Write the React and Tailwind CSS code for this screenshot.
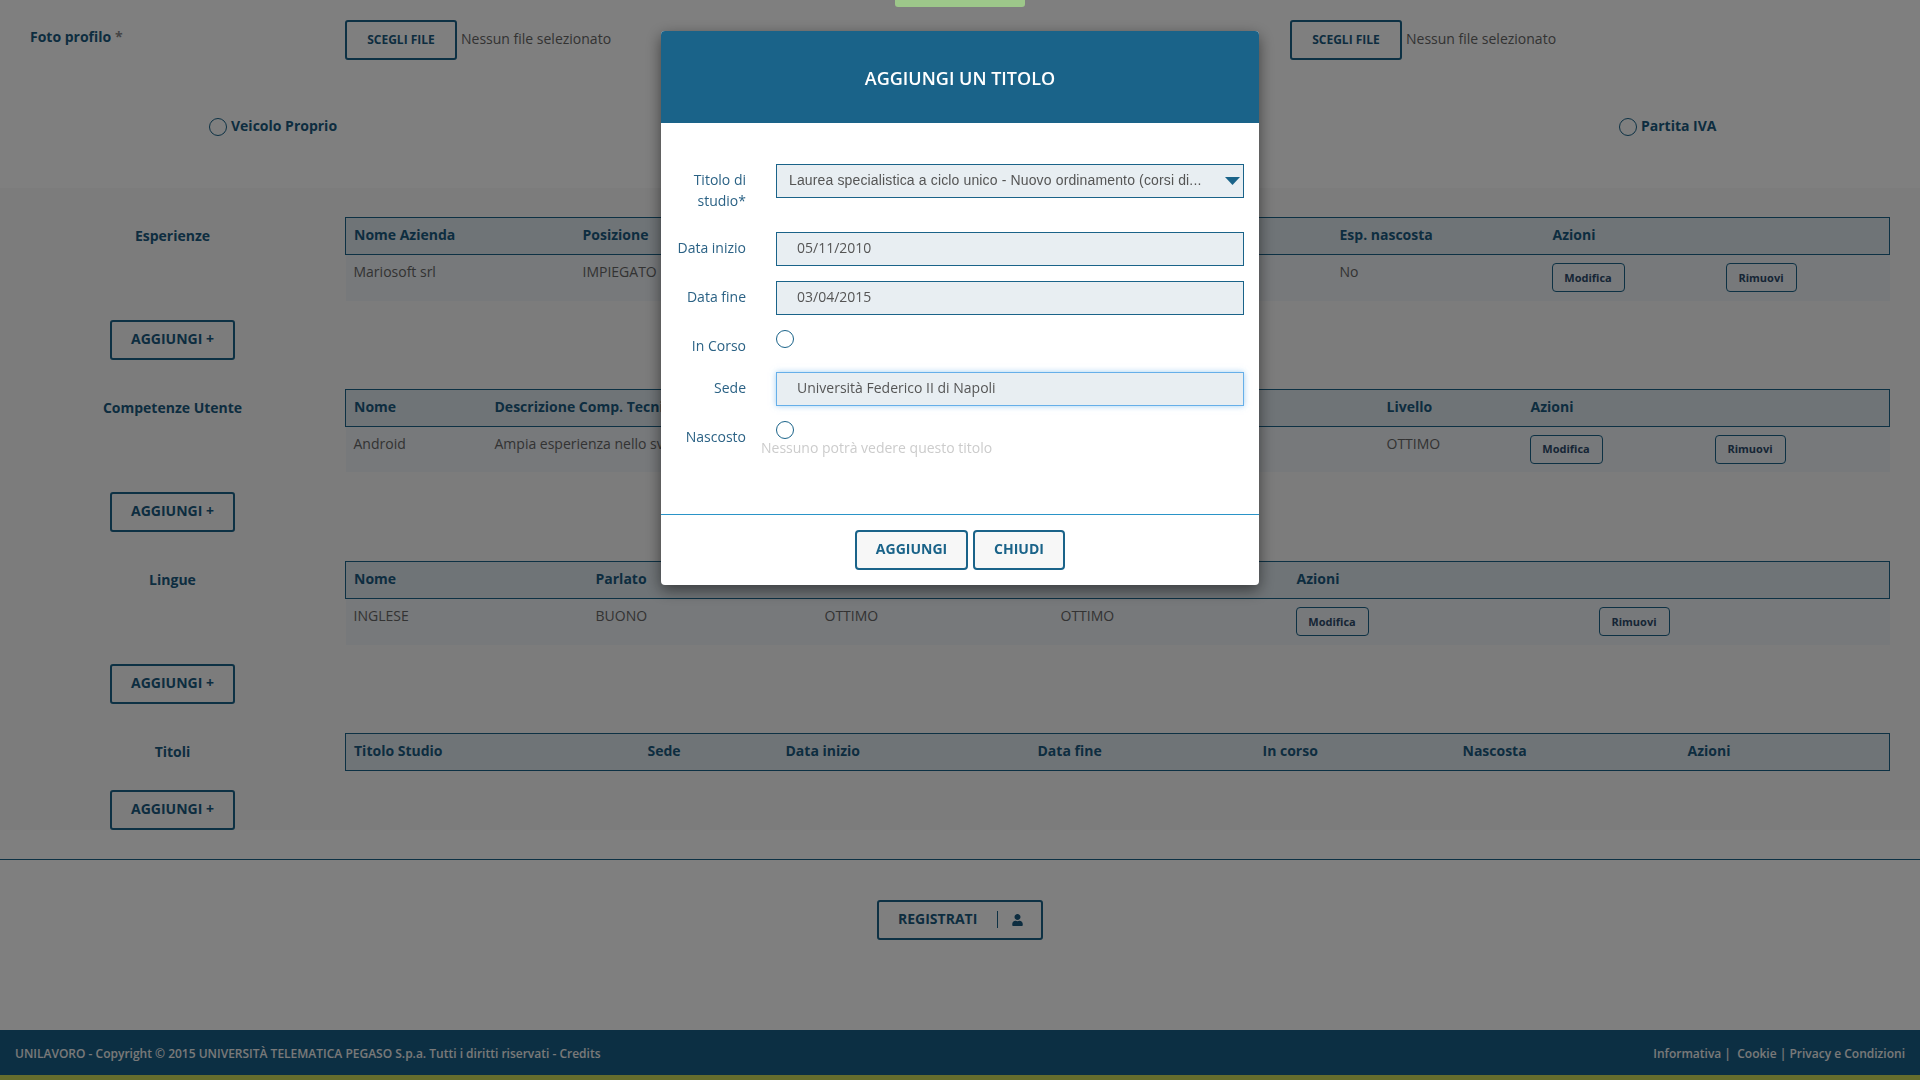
import { FaUser } from "react-icons/fa";

const rowBtn =
  "h-[29px] rounded-[4px] border border-[#1a6389] bg-transparent pb-[1px] text-[11px] font-bold text-[#2c4a6b]";

function Modifica() {
  return <button className={`${rowBtn} w-[73px]`}>Modifica</button>;
}

function Rimuovi() {
  return <button className={`${rowBtn} w-[71px]`}>Rimuovi</button>;
}

function DataTable({ cols, head, cells }) {
  return (
    <table className="w-[1544px] table-fixed border-collapse text-[14px]">
      <colgroup>
        {cols.map((c, i) => (
          <col key={i} className={c} />
        ))}
      </colgroup>
      <thead>
        <tr className="h-[37px] border border-[#1a6389] bg-[#dfe8ee]">
          {head.map((h, i) => (
            <th key={i} className="pb-[3px] pl-[8px] text-left align-middle font-bold text-[#1a5a80]">
              {h}
            </th>
          ))}
        </tr>
      </thead>
      {cells && (
        <tbody>
          <tr className="h-[46px] bg-[#eef2f6]">
            {cells.map((c, i) =>
              typeof c === "string" ? (
                <td key={i} className="pl-[8px] pt-[6px] align-top leading-[21px] text-[#666666]">
                  {c}
                </td>
              ) : (
                <td key={i} className="pl-[7px] pt-[8px] align-top leading-[21px]">
                  {c}
                </td>
              )
            )}
          </tr>
        </tbody>
      )}
    </table>
  );
}

function AddButton() {
  return (
    <button className="ml-[110px] block h-[40px] w-[125px] rounded-[3px] border-2 border-[#1a6389] pb-[3px] text-[14px] font-bold text-[#1a5a80]">
      AGGIUNGI +
    </button>
  );
}

function Block({ title, addGap, children }) {
  return (
    <div>
      <div className="flex">
        <div className="w-[345px] pt-[8px] text-center text-[14px] font-bold leading-[21px] text-[#1a5a80]">
          {title}
        </div>
        {children}
      </div>
      <div className={addGap}>
        <AddButton />
      </div>
    </div>
  );
}

function FilePick() {
  return (
    <div className="flex items-center">
      <button className="h-[40px] w-[112px] rounded-[3px] border-2 border-[#1a6389] text-[12px] font-bold text-[#1a5a80]">
        SCEGLI FILE
      </button>
      <span className="mb-[4px] ml-[4px] text-[14px] text-[#666666]">Nessun file selezionato</span>
    </div>
  );
}

function Radio({ className = "" }) {
  return (
    <input
      type="radio"
      className={`block h-[18px] w-[18px] appearance-none rounded-full border border-[#1a6389] bg-transparent ${className}`}
    />
  );
}

function FieldRow({ label, rowClass, children }) {
  return (
    <div className={`flex ${rowClass}`}>
      <div className="w-[85px] pt-[5px] text-right text-[14px] leading-[21px] text-[#2b6285]">{label}</div>
      <div className="ml-[30px] w-[468px]">{children}</div>
    </div>
  );
}

function TextField({ value, focused }) {
  return (
    <div
      className={
        focused
          ? "flex h-[34px] items-center border border-[#66afe9] bg-[#e8eef2] pb-[3px] pl-[20px] text-[14px] text-[#555555] shadow-[0_0_6px_rgba(102,175,233,0.6)]"
          : "flex h-[34px] items-center border border-[#1a6389] bg-[#e8eef2] pb-[3px] pl-[20px] text-[14px] text-[#555555]"
      }
    >
      {value}
    </div>
  );
}

export default function App() {
  return (
    <div className="relative flex h-screen flex-col overflow-hidden bg-white font-['Open_Sans',sans-serif]">
      {/* Profile pictures and yes/no flags */}
      <section className="h-[188px] shrink-0">
        <div className="flex pt-[20px]">
          <div className="w-[345px] pl-[30px] pt-[6px] text-[14px] font-bold leading-[21px] text-[#1a5a80]">
            Foto profilo <span className="text-[#888888]">*</span>
          </div>
          <div className="w-[945px]">
            <FilePick />
          </div>
          <FilePick />
        </div>
        <div className="mt-[55px] flex items-start">
          <div className="flex w-[1619px] items-start pl-[209px]">
            <Radio className="mt-[3px]" />
            <span className="ml-[4px] text-[14px] font-bold text-[#1a5a80]">Veicolo Proprio</span>
          </div>
          <div className="flex items-start">
            <Radio className="mt-[3px]" />
            <span className="ml-[4px] text-[14px] font-bold text-[#1a5a80]">Partita IVA</span>
          </div>
        </div>
      </section>

      {/* Experience, skills, languages and degrees */}
      <section className="flex h-[642px] shrink-0 flex-col gap-[29px] bg-[#f8f8f8] pt-[29px]">
        <Block title="Esperienze" addGap="mt-[19px]">
          <DataTable
            cols={["w-[229px]", "w-[757px]", "w-[213px]", "w-[174px]", "w-[171px]"]}
            head={["Nome Azienda", "Posizione", "Esp. nascosta", "Azioni", ""]}
            cells={["Mariosoft srl", "IMPIEGATO", "No", <Modifica />, <Rimuovi />]}
          />
        </Block>
        <Block title="Competenze Utente" addGap="mt-[20px]">
          <DataTable
            cols={["w-[141px]", "w-[892px]", "w-[144px]", "w-[185px]", "w-[182px]"]}
            head={["Nome", "Descrizione Comp. Tecnica", "Livello", "Azioni", ""]}
            cells={["Android", "Ampia esperienza nello sviluppo", "OTTIMO", <Modifica />, <Rimuovi />]}
          />
        </Block>
        <Block title="Lingue" addGap="mt-[19px]">
          <DataTable
            cols={["w-[242px]", "w-[229px]", "w-[236px]", "w-[236px]", "w-[303px]", "w-[298px]"]}
            head={["Nome", "Parlato", "", "", "Azioni", ""]}
            cells={["INGLESE", "BUONO", "OTTIMO", "OTTIMO", <Modifica />, <Rimuovi />]}
          />
        </Block>
        <Block title="Titoli" addGap="mt-[19px]">
          <DataTable
            cols={["w-[294px]", "w-[138px]", "w-[252px]", "w-[225px]", "w-[200px]", "w-[225px]", "w-[210px]"]}
            head={["Titolo Studio", "Sede", "Data inizio", "Data fine", "In corso", "Nascosta", "Azioni"]}
          />
        </Block>
      </section>

      {/* Submit */}
      <section className="mt-[29px] flex h-[171px] shrink-0 justify-center border-t border-[#1a6389] pt-[40px]">
        <button className="flex h-[40px] w-[166px] items-center rounded-[3px] border-2 border-[#1a6389] pl-[19px] text-[14px] font-bold text-[#1a5a80]">
          <span className="mb-[3px] w-[99px] text-left">REGISTRATI</span>
          <span className="mb-[1px] mr-[14px] h-[17px] border-l border-[#1a6389]" />
          <FaUser className="mb-[1px] h-[12px] w-[11px]" />
        </button>
      </section>

      <footer className="flex h-[45px] shrink-0 items-center justify-between bg-[#185e86] px-[15px] pt-[2px] text-[12px] font-semibold text-[#f2f2f2]">
        <span>UNILAVORO - Copyright © 2015 UNIVERSITÀ TELEMATICA PEGASO S.p.a. Tutti i diritti riservati - Credits</span>
        <span className="whitespace-pre">Informativa |  Cookie | Privacy e Condizioni</span>
      </footer>
      <div className="h-[5px] shrink-0 bg-[#ccda5a]" />

      {/* Dimmed backdrop behind the dialog */}
      <div className="fixed inset-0 z-40 bg-black/50" />
      <div className="absolute left-[895px] top-0 z-50 h-[7px] w-[130px] rounded-b-[3px] bg-[#9dc78a]" />

      {/* Add-a-degree dialog */}
      <div className="fixed inset-x-0 top-[31px] z-50 mx-auto w-[598px] overflow-hidden rounded-[4px] bg-white shadow-[0_5px_15px_rgba(0,0,0,0.5)]">
        <div className="flex h-[92px] items-center justify-center bg-[#1a6389] pt-[2px] text-[18px] font-semibold text-white">
          AGGIUNGI UN TITOLO
        </div>
        <div className="h-[391px] pt-[41px]">
          <FieldRow
            rowClass="h-[68px]"
            label={
              <>
                Titolo di
                <br />
                studio*
              </>
            }
          >
            <div className="flex h-[34px] items-center justify-between border border-[#1a6389] bg-[#e8eef2] pb-[2px] pl-[12px] pr-[3px] text-[14px] text-[#555555]">
              <span className="font-['Liberation_Sans',sans-serif] tracking-[0.14px]">
                Laurea specialistica a ciclo unico - Nuovo ordinamento (corsi di...
              </span>
              <svg width="15" height="8" viewBox="0 0 15 8" className="mt-[2px]">
                <polygon points="0,0 15,0 7.5,8" fill="#1a6389" />
              </svg>
            </div>
          </FieldRow>
          <FieldRow rowClass="h-[49px]" label="Data inizio">
            <TextField value="05/11/2010" />
          </FieldRow>
          <FieldRow rowClass="h-[49px]" label="Data fine">
            <TextField value="03/04/2015" />
          </FieldRow>
          <FieldRow rowClass="h-[42px]" label="In Corso">
            <Radio />
          </FieldRow>
          <FieldRow rowClass="h-[49px]" label="Sede">
            <TextField value="Università Federico II di Napoli" focused />
          </FieldRow>
          <FieldRow rowClass="h-[16px]" label="Nascosto">
            <Radio />
          </FieldRow>
          <div className="ml-[100px] w-fit text-[14px] leading-[21px] text-[#cccccc]">Nessuno potrà vedere questo titolo</div>
        </div>
        <div className="flex h-[71px] justify-center gap-[5px] border-t border-[#2a94c8] pt-[15px]">
          <button className="h-[40px] w-[113px] rounded-[4px] border-2 border-[#1a6389] bg-[#f7f7f7] pb-[3px] text-[14px] font-bold text-[#1a6389]">
            AGGIUNGI
          </button>
          <button className="h-[40px] w-[92px] rounded-[4px] border-2 border-[#1a6389] bg-[#f7f7f7] pb-[3px] text-[14px] font-bold text-[#1a6389]">
            CHIUDI
          </button>
        </div>
      </div>
    </div>
  );
}
